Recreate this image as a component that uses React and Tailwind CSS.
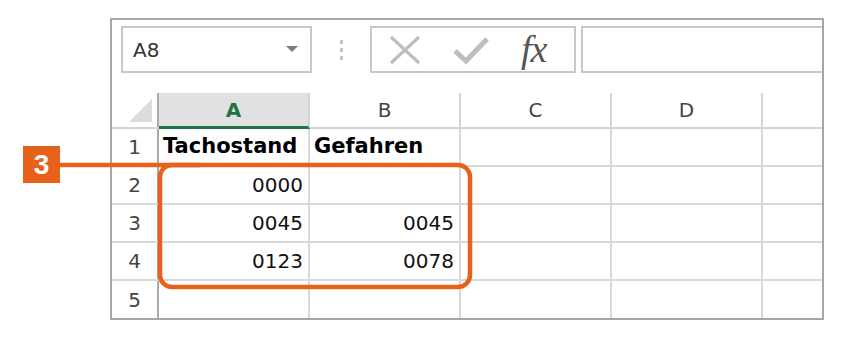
import React from 'react';

const font = { fontFamily: '"DejaVu Sans", "Liberation Sans", sans-serif' };

const rows = [
  { n: '1', a: 'Tachostand', b: 'Gefahren', bold: true },
  { n: '2', a: '0000', b: '' },
  { n: '3', a: '0045', b: '0045' },
  { n: '4', a: '0123', b: '0078' },
  { n: '5', a: '', b: '', last: true },
];

const FormulaBar = () => (
  <div className="flex h-[73px] items-start gap-0 pt-[6px]">
    {/* Namenfeld */}
    <div className="ml-[9px] flex h-[47px] w-[191px] items-center justify-between border-2 border-[#c8c8c8] pl-[10px] pr-[12px]">
      <span className="text-[20px] text-[#333]">A8</span>
      <svg width="12" height="7" viewBox="0 0 12 7">
        <path d="M0 0 H12 L6 6 Z" fill="#7a7a7a" />
      </svg>
    </div>
    {/* Trennpunkte */}
    <div className="flex h-[47px] w-[58px] flex-col items-center justify-center gap-[4px]">
      <span className="h-[4px] w-[3px] bg-[#c4c4c4]"></span>
      <span className="h-[4px] w-[3px] bg-[#c4c4c4]"></span>
      <span className="h-[4px] w-[3px] bg-[#c4c4c4]"></span>
    </div>
    {/* Abbrechen / Eingeben / fx */}
    <div className="flex h-[47px] w-[206px] items-center border-2 border-[#c8c8c8]">
      <svg className="ml-[16px]" width="34" height="32" viewBox="0 0 34 32">
        <path d="M3 3 L31 29 M31 3 L3 29" stroke="#bdbdbd" strokeWidth="3.2" fill="none" />
      </svg>
      <svg className="ml-[30px]" width="38" height="30" viewBox="0 0 38 30">
        <path d="M3 16 L14 26 L35 4" stroke="#bdbdbd" strokeWidth="5" fill="none" strokeLinejoin="miter" />
      </svg>
      <span
        className="ml-[31px] -mt-[2px] text-[38px] italic leading-none tracking-[-1px] text-[#555]"
        style={{ fontFamily: '"Liberation Serif", "DejaVu Serif", serif' }}
      >
        fx
      </span>
    </div>
    {/* Bearbeitungsleiste */}
    <div className="ml-[5px] h-[47px] flex-1 border-y-2 border-l-2 border-[#c8c8c8]"></div>
  </div>
);

const HeaderRow = () => (
  <div className="flex h-[36px] border-b-2 border-[#d4d4d4]">
    <div className="relative w-[47px] border-r-2 border-[#ababab]">
      <svg className="absolute left-[17px] top-[6px]" width="23" height="23" viewBox="0 0 23 23">
        <path d="M23 0 V23 H0 Z" fill="#dcdcdc" />
      </svg>
    </div>
    <div className="-mb-[2px] flex w-[151px] items-center justify-center border-b-[3px] border-r-2 border-b-[#217346] border-r-[#d4d4d4] bg-[#e1e1e1] text-[20px] font-bold text-[#217346]">
      A
    </div>
    <div className="flex w-[151px] items-center justify-center border-r-2 border-[#d4d4d4] text-[20px] text-[#444]">B</div>
    <div className="flex w-[151px] items-center justify-center border-r-2 border-[#d4d4d4] text-[20px] text-[#444]">C</div>
    <div className="flex w-[151px] items-center justify-center border-r-2 border-[#d4d4d4] text-[20px] text-[#444]">D</div>
    <div className="flex-1"></div>
  </div>
);

const Row = ({ r }) => {
  const align = r.bold
    ? 'justify-start pl-[4px] text-[21px] font-bold text-black'
    : 'justify-end pr-[5px] text-[20px] text-[#111]';
  return (
    <div className={`flex ${r.last ? 'h-[37px]' : 'h-[38px] border-b-2 border-[#d9d9d9]'}`}>
      <div className="flex w-[47px] items-center justify-center border-r-2 border-[#ababab] text-[20px] text-[#444]">
        {r.n}
      </div>
      <div className={`flex w-[151px] items-center border-r-2 border-[#d9d9d9] ${align}`}>{r.a}</div>
      <div className={`flex w-[151px] items-center border-r-2 border-[#d9d9d9] ${align}`}>{r.b}</div>
      <div className="w-[151px] border-r-2 border-[#d9d9d9]"></div>
      <div className="w-[151px] border-r-2 border-[#d9d9d9]"></div>
      <div className="flex-1"></div>
    </div>
  );
};

const App = () => {
  return (
    <div className="relative h-[342px] w-[850px] overflow-hidden bg-white" style={font}>
      <div className="pl-[110px] pt-[18px]">
        <div className="w-[714px] border-2 border-[#a6a6a6] bg-white">
          <FormulaBar />
          <HeaderRow />
          {rows.map((r) => (
            <Row key={r.n} r={r} />
          ))}
        </div>
      </div>

      {/* Markierung 3 */}
      <svg className="pointer-events-none absolute left-0 top-0" width="850" height="342" viewBox="0 0 850 342">
        <line x1="58" y1="165" x2="200" y2="165" stroke="#e8611a" strokeWidth="4.5" />
        <rect x="160" y="165" width="310" height="122" rx="12" ry="12" fill="none" stroke="#e8611a" strokeWidth="4.5" />
      </svg>
      <div
        className="absolute left-[23px] top-[146px] flex h-[37px] w-[37px] items-center justify-center bg-[#e8611a] text-[28px] font-bold leading-none text-white"
        style={{ fontFamily: '"Liberation Sans", Arial, sans-serif' }}
      >
        3
      </div>
    </div>
  );
};

export default App;
